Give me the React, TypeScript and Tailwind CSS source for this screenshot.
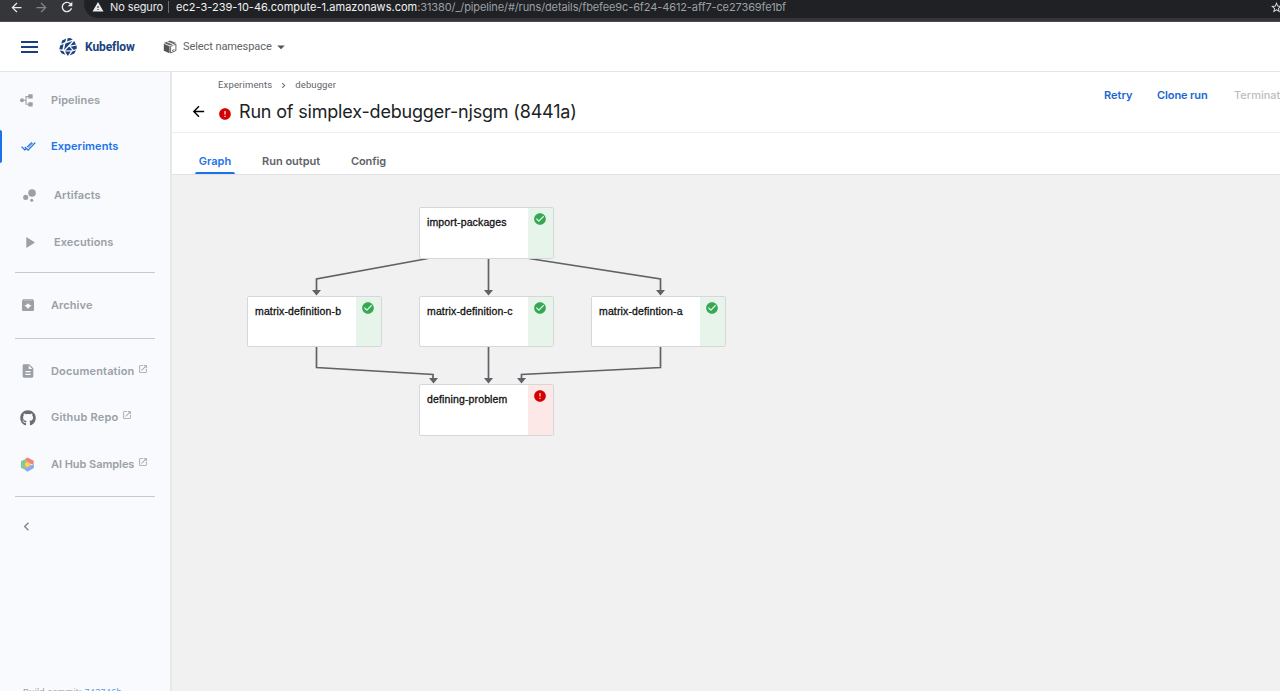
import React from "react";
import {
  MdArchive,
  MdArrowBack,
  MdArrowDropDown,
  MdArrowForward,
  MdBubbleChart,
  MdCheckCircle,
  MdChevronLeft,
  MdChevronRight,
  MdDescription,
  MdError,
  MdOpenInNew,
  MdPlayArrow,
  MdRefresh,
  MdStarBorder,
  MdWarning,
} from "react-icons/md";
import { FaGithub } from "react-icons/fa";

function BrowserBar() {
  return (
    <div className="flex h-[22px] shrink-0 overflow-hidden border-b border-[#4a4b4f] bg-[#35363a] font-['Inter',sans-serif] text-[11px] leading-[14px] text-[#e8eaed]">
      <div className="flex h-[14px] w-[84px] shrink-0 items-center">
        <MdArrowBack className="ml-[9px] size-[15px] shrink-0" />
        <MdArrowForward className="ml-[10px] size-[15px] shrink-0 text-[#85868a]" />
        <MdRefresh className="ml-[10px] size-[16px] shrink-0" />
      </div>
      <div className="-mt-[10px] flex h-[28px] w-[1220px] shrink-0 items-center rounded-l-full bg-[#202124] pt-[6px]">
        <MdWarning className="ml-[8px] size-[12px] shrink-0" />
        <span className="ml-[6px] w-[53px] shrink-0 whitespace-nowrap tracking-[-0.1px]">No seguro</span>
        <span className="ml-[5px] h-[12px] w-px shrink-0 bg-[#6c6d70]" />
        <span className="ml-[7px] w-[1094px] shrink-0 whitespace-nowrap tracking-[0.02px] text-[#9aa0a6]">
          <span className="text-[#f1f3f4]">ec2-3-239-10-46.compute-1.amazonaws.com</span>
          <span className="tracking-[-0.11px]">:31380/_/pipeline/#/runs/details/fbefee9c-6f24-4612-aff7-ce27369fe1bf</span>
        </span>
        <MdStarBorder className="size-[13px] shrink-0" />
      </div>
    </div>
  );
}

function KubeflowLogo() {
  return (
    <svg viewBox="0 0 20 20" className="size-[20px] shrink-0" fill="#19417f">
      <path d="M4.2 3.6 8.2 1.6 7.2 5 3.2 6.8z" />
      <path d="M9.6 1.2 12 1 14.8 2.6 9.2 4.6z" />
      <path d="M2.2 8.4 5.6 6.9 4.4 12.4 1.3 12.2z" />
      <path d="M7.4 6.5 14.6 4 6 12.9z" />
      <path d="M16.2 4 18 7.4 12.3 8.5z" />
      <path d="M11.2 9.4 14.4 13.2 7.2 13.4z" />
      <path d="M12.8 9.7 18.7 8.6 18.7 11.8 15.8 13z" />
      <path d="M1.8 13.6 5.2 13.9 7.4 17.8 3.8 16.6z" />
      <path d="M7 14.6 12.8 14.5 9.8 18.9z" />
      <path d="M14.4 14.6 18.1 13.2 16.2 16.6 11.6 18.6z" />
    </svg>
  );
}

function CubeIcon() {
  return (
    <svg viewBox="0 0 14 14" className="size-[14px] shrink-0">
      <path d="M7 .6 13.2 3 7 5.6.8 3z" fill="#666" />
      <path d="M.8 3.8 6.6 6.2v7L.8 10.8z" fill="#555" />
      <path d="M7.6 6.4 12.9 4.1v6.5l-5.3 2.3z" fill="#fff" stroke="#555" strokeWidth=".9" />
      <path d="M4 1.8 10.2 4.3v2.9" fill="none" stroke="#fff" strokeWidth=".9" />
      <path d="M9 10.6 11.5 9.5" stroke="#666" strokeWidth=".9" />
    </svg>
  );
}

function Header() {
  return (
    <header className="flex h-[50px] shrink-0 items-center border-b border-[#e4e5e6] bg-white">
      <div className="ml-[21px] flex w-[17px] flex-col gap-[3px]">
        <span className="h-[2px] bg-[#19417f]" />
        <span className="h-[2px] bg-[#19417f]" />
        <span className="h-[2px] bg-[#19417f]" />
      </div>
      <div className="ml-[20px] flex w-[105px] items-center">
        <KubeflowLogo />
        <span className="ml-[7px] font-['Roboto',sans-serif] text-[12px] font-bold tracking-[-0.1px] text-[#19417f]">
          Kubeflow
        </span>
      </div>
      <CubeIcon />
      <span className="ml-[6px] mt-[2px] w-[90px] whitespace-nowrap font-['Roboto',sans-serif] text-[11px] tracking-[-0.08px] text-[#5f6368]">
        Select namespace
      </span>
      <MdArrowDropDown className="size-[18px] shrink-0 -ml-[1px] text-[#555]" />
    </header>
  );
}

function PipelinesIcon() {
  return (
    <svg viewBox="0 0 13 13" className="size-[13px]" fill="#9aa0a6">
      <circle cx="2" cy="6.3" r="2" />
      <path d="M2 6.3h4M8.5 2.6H6v7.6h2.5" fill="none" stroke="#9aa0a6" strokeWidth="1.1" />
      <rect x="8.2" y=".3" width="4.5" height="4.2" rx=".6" />
      <rect x="8.2" y="8.2" width="4.5" height="4.2" rx=".6" />
    </svg>
  );
}

function ExperimentsIcon() {
  return (
    <svg viewBox="0 0 15 11" className="h-[11px] w-[15px]" fill="none" stroke="#1967d2" strokeWidth="1.1">
      <path d="M.6 5.6 3.8 9 5 7.8M3.8 6l3.3 3.3 7.2-7.6M6.2 6.2 10.8 1.5" />
      <path d="M7 7.4 12.4 1.8" strokeWidth=".7" />
    </svg>
  );
}

function HubIcon() {
  return (
    <svg viewBox="0 0 16 16" className="size-[15px]">
      <path d="M1 4.5 6.2 2 8 8 6 13.8 1 11.5z" fill="#81c995" />
      <path d="M5.6 1.8 8 .5l6.6 3.6v4.2L8 6z" fill="#f0837c" />
      <path d="M14.8 8v3.8L8 15.7 5 13.6 9 9z" fill="#86aaf5" />
      <circle cx="8" cy="8" r="2.9" fill="#fbd45c" stroke="#f19a67" strokeWidth=".7" />
    </svg>
  );
}

type NavProps = {
  icon: React.ReactNode;
  label: string;
  row: string;
  slot?: string;
  text?: string;
  external?: boolean;
};

function NavItem({ icon, label, row, slot = "w-[31px]", text = "tracking-[0.08px] text-[#9aa0a6]", external }: NavProps) {
  return (
    <div className={`flex items-center ${row}`}>
      <span className={`flex shrink-0 items-center ${slot}`}>{icon}</span>
      <span className={`whitespace-nowrap text-[11px] font-semibold ${text}`}>{label}</span>
      {external && <MdOpenInNew className="mb-[5px] ml-[4px] size-[10px] text-[#9aa0a6]" />}
    </div>
  );
}

function Divider() {
  return <div className="ml-[15px] h-px w-[140px] shrink-0 bg-[#c6c9cd]" />;
}

function Sidebar() {
  return (
    <nav className="flex w-[172px] shrink-0 flex-col overflow-hidden border-r-2 border-[#e6e7e8] bg-[#f8fafd] pt-[5px]">
      <NavItem row="h-[46px] shrink-0 pl-[20px]" icon={<PipelinesIcon />} label="Pipelines" />
      <div className="flex h-[47px] shrink-0 items-center">
        <span className="h-[33px] w-[2px] rounded-r bg-[#1a73e8]" />
        <NavItem
          row="pl-[19px]"
          slot="w-[30px]"
          icon={<ExperimentsIcon />}
          label="Experiments"
          text="tracking-[0.08px] text-[#1a73e8]"
        />
      </div>
      <NavItem
        row="h-[50px] shrink-0 pl-[20px]"
        slot="w-[34px]"
        icon={<MdBubbleChart className="size-[19px] text-[#9aa0a6]" />}
        label="Artifacts"
      />
      <NavItem
        row="mb-[8px] h-[44px] shrink-0 pl-[20px]"
        slot="w-[34px]"
        icon={<MdPlayArrow className="size-[19px] text-[#9aa0a6]" />}
        label="Executions"
      />
      <Divider />
      <NavItem
        row="mb-[13px] mt-[12px] h-[40px] shrink-0 pl-[20px]"
        icon={<MdArchive className="size-[16px] text-[#9aa0a6]" />}
        label="Archive"
      />
      <Divider />
      <NavItem
        row="mt-[9px] h-[46px] shrink-0 pl-[20px]"
        icon={<MdDescription className="size-[16px] text-[#9aa0a6]" />}
        label="Documentation"
        text="tracking-[0.16px] text-[#9aa0a6]"
        external
      />
      <NavItem
        row="h-[47px] shrink-0 pl-[20px]"
        icon={<FaGithub className="size-[16px] text-[#6b6d70]" />}
        label="Github Repo"
        text="tracking-[0.2px] text-[#9aa0a6]"
        external
      />
      <NavItem
        row="mb-[9px] h-[46px] shrink-0 pl-[20px]"
        icon={<HubIcon />}
        label="AI Hub Samples"
        text="tracking-[-0.05px] text-[#9aa0a6]"
        external
      />
      <Divider />
      <MdChevronLeft className="ml-[18px] mt-[21px] size-[17px] shrink-0 text-[#80868b]" />
      <div className="ml-[23px] mt-[152px] shrink-0 whitespace-nowrap font-['Liberation_Sans',sans-serif] text-[9px] leading-[10px] tracking-[0.35px] text-[#9aa0a6]">
        Build commit: <span className="text-[#5b9fd6]">743746b</span>
      </div>
    </nav>
  );
}

function PageHeading() {
  return (
    <div className="flex h-[61px] shrink-0 justify-between border-b border-[#eeeeee] bg-white">
      <div className="flex flex-col">
        <div className="ml-[46px] mt-[6px] flex h-[14px] items-center text-[9.5px] text-[#5f6368]">
          <span className="font-['Roboto',sans-serif] tracking-[0.15px]">Experiments</span>
          <MdChevronRight className="mx-[6px] size-[11px]" />
          <span className="font-['Roboto',sans-serif] tracking-[0.1px]">debugger</span>
        </div>
        <div className="ml-[18px] mt-[5px] flex h-[28px] items-center">
          <MdArrowBack className="size-[17px] text-black" />
          <MdError className="ml-[11px] mt-[6px] size-[14px] text-[#d50000]" />
          <h1 className="ml-[7px] whitespace-nowrap text-[18px] tracking-[-0.18px] text-[#202124]">
            Run of simplex-debugger-njsgm (8441a)
          </h1>
        </div>
      </div>
      <div className="flex w-[176px] items-center overflow-hidden whitespace-nowrap pb-[13px] text-[11px] font-semibold text-[#1967d2]">
        <span className="w-[53px] shrink-0">Retry</span>
        <span className="w-[77px] shrink-0 tracking-[-0.1px]">Clone run</span>
        <span className="shrink-0 font-medium text-[#bdbdbd]">Terminate</span>
      </div>
    </div>
  );
}

function Tabs() {
  return (
    <div className="flex h-[42px] shrink-0 items-end border-b border-[#e2e2e2] bg-white pl-[23px] text-[11px] font-semibold leading-[14px] text-[#5f6368]">
      <div className="flex w-[40px] flex-col items-center text-[#1a73e8]">
        <span>Graph</span>
        <span className="mt-[4px] h-[2px] w-full rounded-t bg-[#1a73e8]" />
      </div>
      <span className="mb-[6px] ml-[27px] w-[89px] whitespace-nowrap">Run output</span>
      <span className="mb-[6px] tracking-[-0.1px]">Config</span>
    </div>
  );
}

function GraphNode({ label, place, failed = false }: { label: string; place: string; failed?: boolean }) {
  return (
    <div className={`absolute flex w-[135px] overflow-hidden rounded-[2px] border border-[#d6d7d8] bg-white ${place}`}>
      <span className="flex-1 whitespace-nowrap pl-[7px] pt-[7px] font-['Liberation_Sans',sans-serif] text-[10.5px] font-normal leading-[14px] tracking-[0.14px] text-[#111] [-webkit-text-stroke:0.3px_#111]">
        {label}
      </span>
      <span className={`flex w-[25px] shrink-0 pl-[5px] pt-[4px] ${failed ? "bg-[#fce8e6]" : "bg-[#e6f4ea]"}`}>
        {failed ? <MdError className="size-[14px] text-[#d50000]" /> : <MdCheckCircle className="size-[14px] text-[#34a853]" />}
      </span>
    </div>
  );
}

function Graph() {
  return (
    <div className="relative flex-1 overflow-hidden bg-[#f1f1f1]">
      <svg className="absolute left-0 top-0" width="640" height="300" viewBox="172 175 640 300">
        <g fill="none" stroke="#5f6368" strokeWidth="1.7">
          <path d="M428 258.5 316.5 279v12" />
          <path d="M488.5 259v32" />
          <path d="M529 258.5 660.5 279v12" />
          <path d="M316.5 347v20.5L433 374.5v5" />
          <path d="M488.5 347v32" />
          <path d="M660.5 347v20.5L521.5 374.5v5" />
        </g>
        <g fill="#5f6368">
          <path d="M312 290h9l-4.5 5.5z" />
          <path d="M484 290h9l-4.5 5.5z" />
          <path d="M656 290h9l-4.5 5.5z" />
          <path d="M429 378h9l-4.5 5.5z" />
          <path d="M484 378h9l-4.5 5.5z" />
          <path d="M517 378h9l-4.5 5.5z" />
        </g>
      </svg>
      <GraphNode label="import-packages" place="left-[247px] top-[32px] h-[52px]" />
      <GraphNode label="matrix-definition-b" place="left-[75px] top-[121px] h-[51px]" />
      <GraphNode label="matrix-definition-c" place="left-[247px] top-[121px] h-[51px]" />
      <GraphNode label="matrix-defintion-a" place="left-[419px] top-[121px] h-[51px]" />
      <GraphNode label="defining-problem" place="left-[247px] top-[209px] h-[52px]" failed />
    </div>
  );
}

export default function App() {
  return (
    <div className="flex h-[691px] w-[1280px] flex-col overflow-hidden bg-white font-['Inter',sans-serif]">
      <BrowserBar />
      <Header />
      <div className="flex min-h-0 flex-1">
        <Sidebar />
        <main className="flex min-w-0 flex-1 flex-col">
          <PageHeading />
          <Tabs />
          <Graph />
        </main>
      </div>
    </div>
  );
}
